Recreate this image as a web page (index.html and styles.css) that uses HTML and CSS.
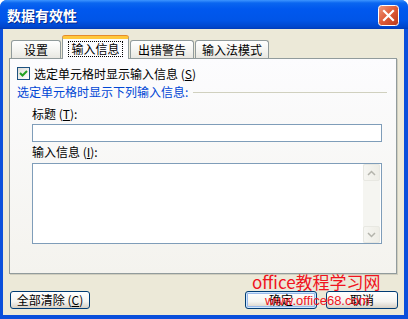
FILE: index.html
```html
<!DOCTYPE html>
<html lang="zh-CN">
<head>
    <meta charset="UTF-8">
    <title>数据有效性</title>
    <link rel="stylesheet" href="styles.css">
</head>
<body>
    <div class="window">
        <div class="titlebar">
            <span class="title">数据有效性</span>
            <span class="close">
                <svg width="21" height="21" viewBox="0 0 21 21">
                    <defs>
                        <linearGradient id="cg" x1="0" y1="0" x2="1" y2="1">
                            <stop offset="0" stop-color="#F09A7E"/>
                            <stop offset="0.5" stop-color="#DE5A36"/>
                            <stop offset="1" stop-color="#B8381A"/>
                        </linearGradient>
                    </defs>
                    <rect x="0.5" y="0.5" width="20" height="20" rx="3" fill="url(#cg)" stroke="#fff"/>
                    <path d="M6 6 L15 15 M15 6 L6 15" stroke="#fff" stroke-width="2.2" stroke-linecap="square"/>
                </svg>
            </span>
        </div>

        <div class="client">
            <div class="tabs">
                <div class="tab tab-1">设置</div>
                <div class="tab tab-2 active"><span class="focus">输入信息</span></div>
                <div class="tab tab-3">出错警告</div>
                <div class="tab tab-4">输入法模式</div>
            </div>

            <div class="panel">
                <div class="check-row">
                    <span class="checkbox">
                        <svg width="11" height="11" viewBox="0 0 11 11">
                            <path d="M2 5 L4.5 7.5 L9 3" fill="none" stroke="#21A121" stroke-width="2"/>
                        </svg>
                    </span>
                    <span>选定单元格时显示输入信息 (<u>S</u>)</span>
                </div>

                <div class="group-title">
                    <span>选定单元格时显示下列输入信息:</span>
                    <span class="rule"></span>
                </div>

                <div class="fields">
                    <div class="field-label">标题 (<u>T</u>):</div>
                    <div class="textbox"></div>
                    <div class="field-label label-2">输入信息 (<u>I</u>):</div>
                    <div class="textarea">
                        <div class="scrollbar">
                            <span class="arrow">
                                <svg width="9" height="6" viewBox="0 0 9 6"><path d="M1 5 L4.5 1.5 L8 5" fill="none" stroke="#B4B4AC" stroke-width="1.5"/></svg>
                            </span>
                            <span class="track"></span>
                            <span class="arrow">
                                <svg width="9" height="6" viewBox="0 0 9 6"><path d="M1 1 L4.5 4.5 L8 1" fill="none" stroke="#B4B4AC" stroke-width="1.5"/></svg>
                            </span>
                        </div>
                    </div>
                </div>
            </div>

            <div class="footer">
                <button class="btn btn-clear">全部清除 (<u>C</u>)</button>
                <button class="btn btn-ok">确定</button>
                <button class="btn btn-cancel">取消</button>
            </div>

            <div class="watermark">
                <div class="wm-name">office教程学习网</div>
                <div class="wm-url">www.office68.com</div>
            </div>
        </div>
    </div>
</body>
</html>
```

FILE: styles.css
```css
body {
    margin: 0;
    font-family: "Noto Sans CJK SC", "Liberation Sans", sans-serif;
    font-size: 12px;
    color: #000;
    background: #fff;
}
.window {
    width: 408px;
    height: 319px;
    display: flex;
    flex-direction: column;
    background: #0A4FDB;
    border-radius: 7px 7px 0 0;
    overflow: hidden;
}
.titlebar {
    height: 29px;
    flex: none;
    display: flex;
    align-items: center;
    justify-content: space-between;
    padding: 0 7px 0 7px;
    box-sizing: border-box;
    background: linear-gradient(#3D95FF 0, #0A66F0 3px, #0058EE 9px, #0055E8 20px, #0046CC 27px, #003BB8 29px);
}
.title {
    color: #fff;
    font-size: 14px;
    font-weight: bold;
    text-shadow: 1px 1px 0 #0A2A8A;
    letter-spacing: 0;
}
.close {
    display: flex;
    margin-right: 2px;
    margin-top: 1px;
}
.client {
    flex: 1;
    margin: 0 4px 4px 3px;
    padding: 7px 7px 0 6px;
    background: #ECE9D8;
    position: relative;
}
.tabs {
    height: 23px;
    display: flex;
    align-items: flex-end;
    padding-left: 2px;
    gap: 1px;
    position: relative;
    z-index: 1;
}
.tab {
    height: 18px;
    box-sizing: border-box;
    border: 1px solid #919B9C;
    border-bottom: none;
    border-radius: 3px 3px 0 0;
    background: linear-gradient(#FFFFFF, #F3F3EF 60%, #E8E7E1);
    display: flex;
    align-items: center;
    justify-content: center;
    line-height: 1;
    padding-top: 1px;
    margin-bottom: 1px;
}
.tab-1 { width: 50px; }
.tab-2 { width: 67px; }
.tab-3 { width: 64px; }
.tab-4 { width: 74px; }
.tab.active {
    height: 23px;
    margin-bottom: 0;
    border-top: 3px solid #FFC83C;
    box-shadow: inset 0 0 0 0 transparent, 0 -1px 0 #E68B2C;
    background: #FCFCFE;
    padding-top: 0;
}
.focus {
    border: 1px dotted #000;
    padding: 1px 2px;
    line-height: 1;
}
.panel {
    height: 216px;
    box-sizing: border-box;
    margin-top: -1px;
    border: 1px solid #919B9C;
    border-left-color: #919B9C;
    background: linear-gradient(#FCFCFE, #F4F3EE);
    padding: 8px 9px 0 7px;
    box-shadow: 1px 1px 0 #D0CEBF;
}
.check-row {
    display: flex;
    align-items: center;
    gap: 4px;
    height: 13px;
    line-height: 1;
}
.checkbox {
    width: 13px;
    height: 13px;
    box-sizing: border-box;
    border: 1px solid #1C5180;
    background: linear-gradient(135deg, #DCDCD7, #FFFFFF);
    display: flex;
    align-items: center;
    justify-content: center;
}
.group-title {
    margin-top: 6px;
    height: 12px;
    display: flex;
    align-items: center;
    color: #0046D5;
    line-height: 1;
}
.rule {
    flex: 1;
    height: 1px;
    background: #D0D0BF;
    margin-left: 5px;
}
.fields {
    padding-left: 15px;
    width: 350px;
}
.field-label {
    margin-top: 10px;
    height: 12px;
    line-height: 12px;
}
.label-2 {
    margin-top: 4px;
}
.textbox {
    margin-top: 4px;
    height: 18px;
    box-sizing: border-box;
    border: 1px solid #7F9DB9;
    background: #fff;
}
.textarea {
    margin-top: 5px;
    height: 81px;
    box-sizing: border-box;
    border: 1px solid #7F9DB9;
    background: #fff;
    display: flex;
    justify-content: flex-end;
    padding: 0 1px 0 0;
}
.scrollbar {
    width: 17px;
    display: flex;
    flex-direction: column;
    background: #F5F5F1;
}
.arrow {
    height: 17px;
    box-sizing: border-box;
    border: 1px solid #E8E8E2;
    border-radius: 2px;
    background: linear-gradient(90deg, #F6F6F2, #EEEDE6);
    display: flex;
    align-items: center;
    justify-content: center;
}
.track {
    flex: 1;
}
.footer {
    display: flex;
    margin-top: 17px;
    margin-left: 1px;
    margin-right: -1px;
    gap: 9px;
}
.btn {
    height: 18px;
    box-sizing: border-box;
    border: 1px solid #003C74;
    border-radius: 3px;
    background: linear-gradient(#FFFFFF, #F4F4F0 60%, #D6D0C5);
    font-family: "Noto Sans CJK SC", sans-serif;
    font-size: 12px;
    line-height: 1;
    padding: 0;
    color: #000;
}
.btn-clear {
    width: 80px;
    margin-right: auto;
}
.btn-ok {
    width: 72px;
    box-shadow: inset 0 0 0 1px #CEE7FF, inset 0 0 0 2px #98B8EA;
}
.btn-cancel {
    width: 72px;
}
.watermark {
    position: absolute;
    left: 249px;
    top: 244px;
    color: #F0141E;
    line-height: 1;
}
.wm-name {
    font-size: 17px;
}
.wm-url {
    font-family: "Liberation Sans", sans-serif;
    font-size: 13px;
    margin-top: 4px;
    margin-left: 13px;
}
```
